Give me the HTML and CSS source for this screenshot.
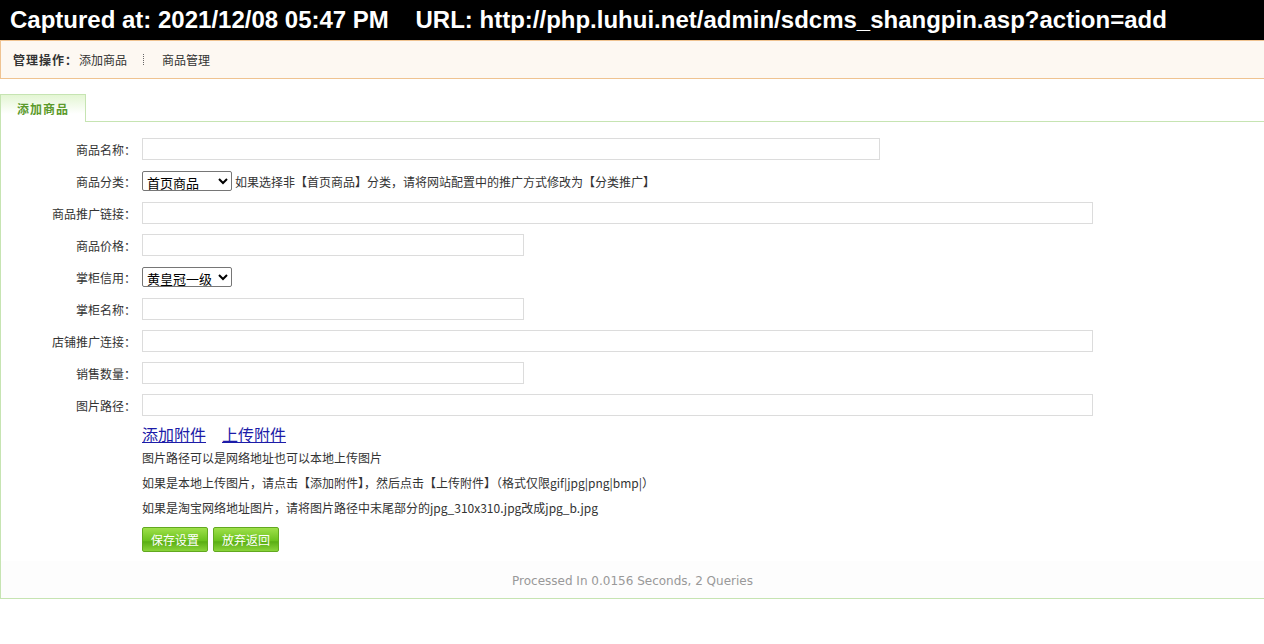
FILE: index.html
```html
<!DOCTYPE html>
<html lang="zh-CN">
<head>
    <meta charset="UTF-8">
    <title>添加商品</title>
    <link rel="stylesheet" href="styles.css">
</head>
<body>
    <div class="capture-bar">Captured at: 2021/12/08 05:47 PM&nbsp;&nbsp;&nbsp;&nbsp;URL: http://php.luhui.net/admin/sdcms_shangpin.asp?action=add</div>

    <div class="subnav">
        <b>管理操作：</b><a href="#">添加商品</a><span class="dots"></span><a href="#">商品管理</a>
    </div>

    <div class="tabs">
        <div class="tab active">添加商品</div>
    </div>

    <div class="panel">
        <form class="goods-form">
            <div class="row">
                <label>商品名称：</label>
                <input type="text" class="input w-lg">
            </div>
            <div class="row">
                <label>商品分类：</label>
                <div class="field">
                    <select class="select">
                        <option>首页商品</option>
                    </select>
                    <span class="hint">如果选择非【首页商品】分类，请将网站配置中的推广方式修改为【分类推广】</span>
                </div>
            </div>
            <div class="row">
                <label>商品推广链接：</label>
                <input type="text" class="input w-xl">
            </div>
            <div class="row">
                <label>商品价格：</label>
                <input type="text" class="input w-md">
            </div>
            <div class="row">
                <label>掌柜信用：</label>
                <div class="field">
                    <select class="select">
                        <option>黄皇冠一级</option>
                    </select>
                </div>
            </div>
            <div class="row">
                <label>掌柜名称：</label>
                <input type="text" class="input w-md">
            </div>
            <div class="row">
                <label>店铺推广连接：</label>
                <input type="text" class="input w-xl">
            </div>
            <div class="row">
                <label>销售数量：</label>
                <input type="text" class="input w-md">
            </div>
            <div class="row">
                <label>图片路径：</label>
                <input type="text" class="input w-xl">
            </div>

            <div class="notes">
                <div class="attach"><a href="#">添加附件</a><a href="#">上传附件</a></div>
                <p>图片路径可以是网络地址也可以本地上传图片</p>
                <p>如果是本地上传图片，请点击【添加附件】，然后点击【上传附件】（格式仅限gif|jpg|png|bmp|）</p>
                <p>如果是淘宝网络地址图片，请将图片路径中末尾部分的jpg_310x310.jpg改成jpg_b.jpg</p>
                <div class="actions">
                    <button type="button" class="btn">保存设置</button>
                    <button type="button" class="btn">放弃返回</button>
                </div>
            </div>
        </form>

        <div class="footer">Processed In 0.0156 Seconds, 2 Queries</div>
    </div>
</body>
</html>
```

FILE: styles.css
```css
* {
    margin: 0;
    padding: 0;
    box-sizing: border-box;
}

body {
    font-family: "Noto Sans CJK SC", "Liberation Sans", sans-serif;
    font-size: 12px;
    color: #333;
    background: #fff;
    overflow: hidden;
}

a {
    color: #333;
    text-decoration: none;
}

.capture-bar {
    height: 40px;
    line-height: 40px;
    padding-left: 10px;
    background: #000;
    color: #fff;
    font-family: "Liberation Sans", Arial, sans-serif;
    font-weight: bold;
    font-size: 24px;
    white-space: nowrap;
}

.subnav {
    display: flex;
    align-items: center;
    height: 39px;
    padding-left: 12px;
    background: #fdf8f2;
    border: 1px solid #efc391;
    border-right: none;
}

.subnav b {
    color: #333;
    letter-spacing: 1px;
    margin-right: 1px;
}

.subnav .dots {
    width: 1px;
    height: 11px;
    margin: 0 18px 0 16px;
    border-left: 1px dotted #666;
}

.tabs {
    display: flex;
    margin-top: 15px;
    height: 28px;
}

.tab {
    width: 86px;
    height: 28px;
    line-height: 27px;
    text-align: center;
    font-weight: bold;
    letter-spacing: 1px;
    color: #5b9a2b;
    border: 1px solid #c6e4b2;
    border-bottom: none;
    background: linear-gradient(#e3f6d3, #ffffff 70%);
}

.panel {
    border: 1px solid #c6e4b2;
    border-right: none;
    margin-top: -1px;
}

.goods-form {
    padding-top: 11px;
}

.row {
    display: grid;
    grid-template-columns: 135px 1fr;
    column-gap: 6px;
    align-items: center;
    height: 32px;
}

.row label {
    text-align: right;
}

.input {
    height: 22px;
    border: 1px solid #dcdcdc;
    background: #fff;
}

.w-lg { width: 738px; }
.w-xl { width: 951px; }
.w-md { width: 382px; }

.field {
    display: flex;
    align-items: center;
    gap: 3px;
}

.select {
    width: 90px;
    height: 20px;
    font-family: "Noto Sans CJK SC", sans-serif;
    font-size: 13px;
    border: 1px solid #767676;
    border-radius: 2px;
    background: #fff;
    color: #000;
}

.notes {
    padding-left: 141px;
    padding-top: 1px;
}

.attach {
    display: flex;
    gap: 16px;
    font-size: 16px;
    line-height: 24px;
}

.attach a {
    color: #1c1ca8;
    text-decoration: underline;
}

.notes p {
    line-height: 25px;
}

.notes p:first-of-type {
    margin-top: -1px;
}

.actions {
    display: flex;
    gap: 5px;
    margin-top: 7px;
}

.btn {
    width: 66px;
    height: 25px;
    font-family: "Noto Sans CJK SC", sans-serif;
    font-size: 12px;
    color: #fff;
    border: 1px solid #62a91f;
    border-radius: 2px;
    background: linear-gradient(#9ee04a, #6cc21e 55%, #5aae14 60%, #8ad43a);
}

.footer {
    margin-top: 9px;
    height: 37px;
    padding-top: 3px;
    line-height: 34px;
    text-align: center;
    color: #999;
    background: #fdfdfd;
    font-family: "DejaVu Sans", Tahoma, sans-serif;
    font-size: 12px;
}
```
